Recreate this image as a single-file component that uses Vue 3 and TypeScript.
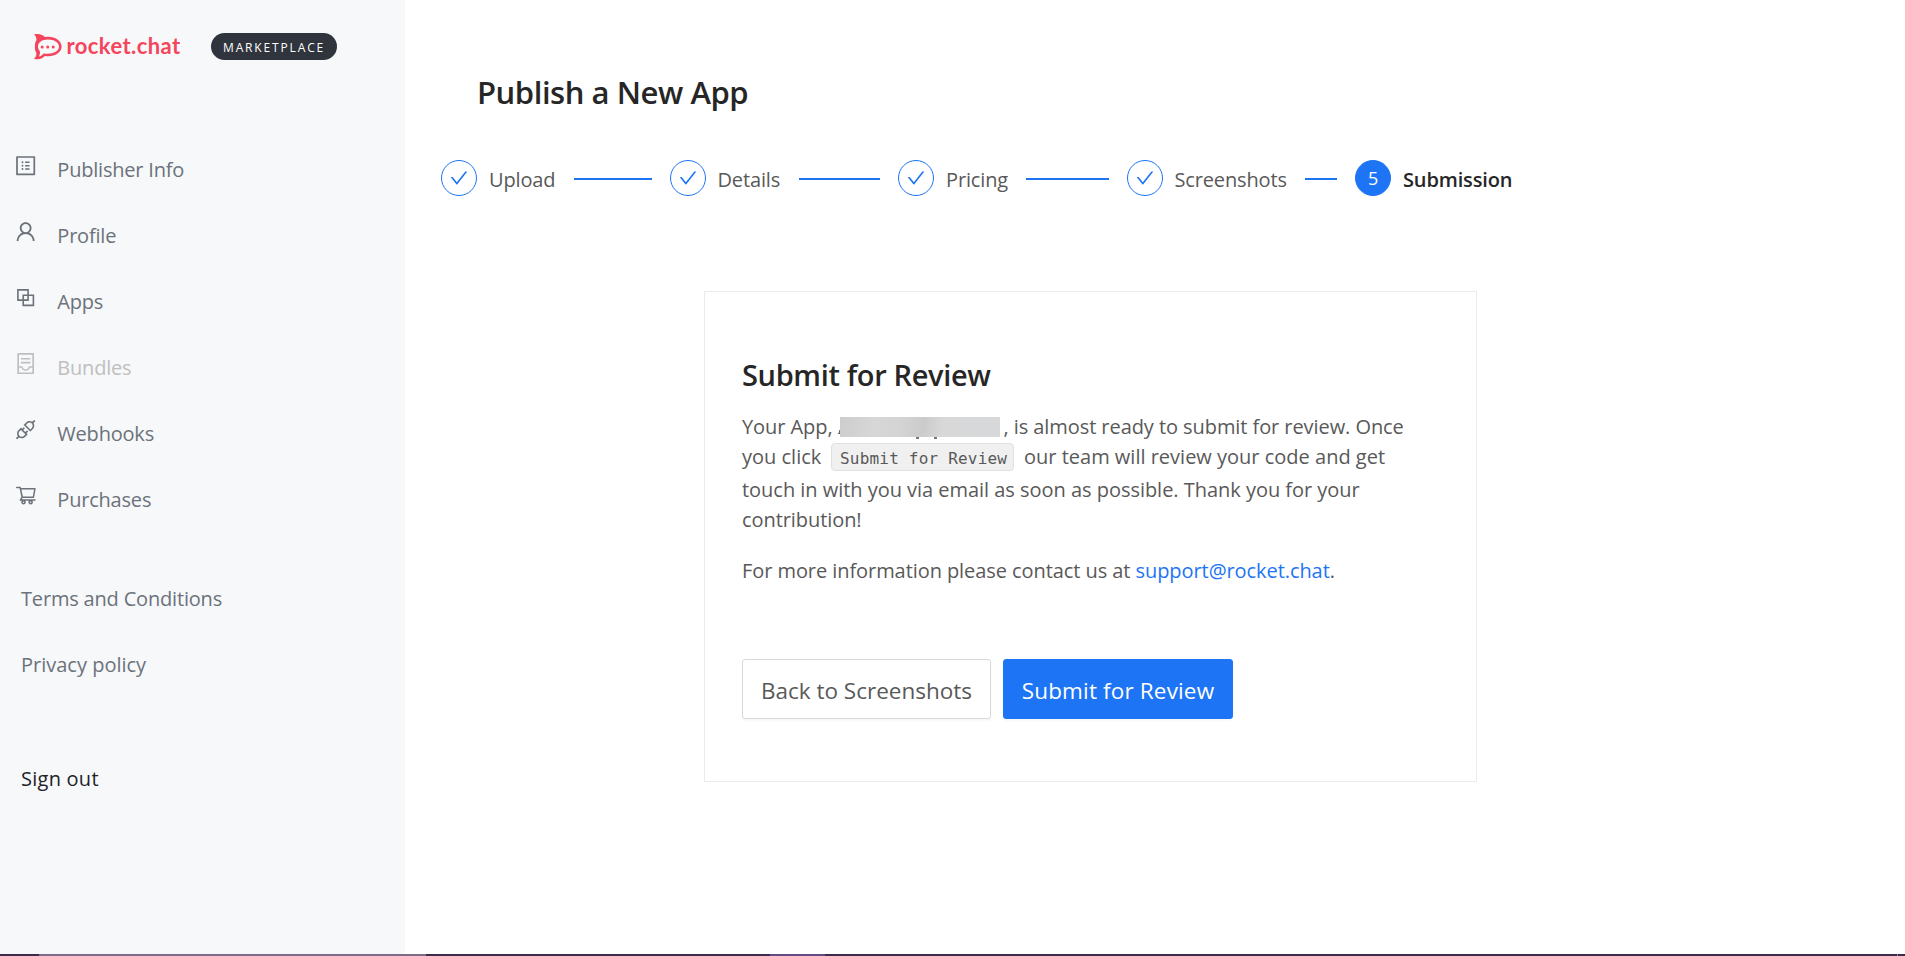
<script setup lang="ts">
interface NavItem {
  label: string
  icon: string
  box?: string
  disabled?: boolean
}

interface Step {
  title: string
  current?: boolean
}

const icons: Record<string, string> = {
  profile:
    'M880 112H144c-17.700 0-32 14.300-32 32v736c0 17.700 14.300 32 32 32h736c17.700 0 32-14.300 32-32V144c0-17.700-14.300-32-32-32zm-40 728H184V184h656v656zM492 400h184v-64H492zM492 544h184v-64H492zM492 688h184v-64H492zM340 368a40 40 0 1 0 80 0 40 40 0 1 0-80 0zM340 512a40 40 0 1 0 80 0 40 40 0 1 0-80 0zM340 656a40 40 0 1 0 80 0 40 40 0 1 0-80 0z',
  user: 'M858.5 763.6a374 374 0 0 0-80.6-119.5 375.63 375.63 0 0 0-119.5-80.6c-.4-.2-.8-.3-1.2-.5C719.5 518 760 444.7 760 362c0-137-111-248-248-248S264 225 264 362c0 82.7 40.5 156 102.8 201.1-.4.2-.8.3-1.2.5-44.8 18.9-85 46-119.5 80.6a375.63 375.63 0 0 0-80.6 119.5A371.7 371.7 0 0 0 136 901.8a8 8 0 0 0 8 8.2h60c4.400 0 7.900-3.500 8-7.800 2-77.200 33-149.500 87.800-204.300 56.700-56.700 132-87.900 212.200-87.900s155.500 31.200 212.200 87.900C779 752.7 810 825 812 902.200c.1 4.400 3.600 7.800 8 7.800h60a8 8 0 0 0 8-8.200c-1-47.800-10.900-94.300-29.500-138.400zM512 534c-45.900 0-89.100-17.900-121.600-50.400S340 407.900 340 362c0-45.900 17.900-89.100 50.400-121.600S466.100 190 512 190s89.100 17.900 121.600 50.400S684 316.100 684 362c0 45.900-17.900 89.100-50.400 121.600S557.900 534 512 534z',
  block:
    'M856 376H648V168c0-8.800-7.200-16-16-16H168c-8.800 0-16 7.200-16 16v464c0 8.800 7.200 16 16 16h208v208c0 8.800 7.200 16 16 16h464c8.800 0 16-7.200 16-16V392c0-8.800-7.200-16-16-16zm-480 16v188H220V220h360v156H392c-8.800 0-16 7.200-16 16zm204 52v136H444V444h136zm224 360H444V648h188c8.800 0 16-7.200 16-16V444h156v360z',
  container:
    'M832 64H192c-17.700 0-32 14.300-32 32v832c0 17.700 14.300 32 32 32h640c17.700 0 32-14.300 32-32V96c0-17.700-14.300-32-32-32zm-40 824H232V687h97.900c11.600 32.800 32 62.300 59.100 84.700 34.500 28.500 78.200 44.300 123 44.300s88.500-15.700 123-44.300c27.100-22.400 47.500-51.900 59.100-84.700H792v201zm0-264H643.600l-5.200 24.700C626.400 708.500 573.200 752 512 752s-114.400-43.500-126.500-103.300l-5.200-24.700H232V136h560v488zM320 341h384c4.400 0 8-3.600 8-8v-48c0-4.400-3.600-8-8-8H320c-4.400 0-8 3.600-8 8v48c0 4.400 3.600 8 8 8zm0 160h384c4.400 0 8-3.600 8-8v-48c0-4.400-3.600-8-8-8H320c-4.400 0-8 3.600-8 8v48c0 4.400 3.600 8 8 8z',
  api: 'M917.7 148.8l-42.4-42.4c-1.6-1.6-3.6-2.3-5.7-2.3s-4.1.8-5.7 2.3l-76.1 76.1a199.27 199.27 0 0 0-112.1-34.3c-51.2 0-102.4 19.5-141.5 58.6L432.3 308.7a8.03 8.03 0 0 0 0 11.3L704 591.7c1.6 1.6 3.6 2.3 5.7 2.3 2 0 4.1-.8 5.7-2.3l101.9-101.9c68.9-69 77-175.7 24.3-253.5l76.1-76.1c3.1-3.2 3.1-8.3 0-11.4zM769.1 441.7l-59.4 59.4-186.8-186.8 59.4-59.4c24.900-24.900 58.100-38.700 93.400-38.700 35.300 0 68.400 13.700 93.400 38.700 24.900 24.900 38.700 58.100 38.700 93.400 0 35.300-13.800 68.400-38.700 93.400zM578.9 546.7a8.03 8.03 0 0 0-11.3 0L501 613.3 410.7 523l66.7-66.700c3.100-3.100 3.100-8.200 0-11.300L441 408.600a8.030 8.030 0 0 0-11.300 0L363 475.300l-43-43a7.850 7.850 0 0 0-5.700-2.300c-2 0-4.100.8-5.700 2.300L206.800 534.200c-68.900 69-77 175.700-24.300 253.500l-76.100 76.100a8.030 8.030 0 0 0 0 11.300l42.400 42.400c1.600 1.600 3.600 2.300 5.700 2.300s4.100-.8 5.700-2.300l76.100-76.100c33.700 22.900 72.900 34.300 112.100 34.300 51.200 0 102.400-19.500 141.500-58.600l101.900-101.900c3.100-3.100 3.100-8.200 0-11.300l-43-43 66.700-66.700c3.100-3.100 3.100-8.200 0-11.300l-36.600-36.200zM441.700 769.100a131.320 131.320 0 0 1-93.400 38.700c-35.300 0-68.400-13.700-93.400-38.700a131.320 131.320 0 0 1-38.700-93.400c0-35.300 13.700-68.400 38.700-93.400l59.400-59.400 186.800 186.800-59.400 59.400z',
  cart: 'M922.9 701.9H327.4l29.9-60.9 496.8-.9c16.8 0 31.2-12 34.2-28.6l68.8-385.1c1.8-10.1-.9-20.5-7.5-28.4a34.99 34.99 0 0 0-26.6-12.5l-632-2.1-5.4-25.4c-3.4-16.2-18-28-34.6-28H96.5a35.3 35.3 0 1 0 0 70.6h125.900L246 312.800l58.100 281.300-74.800 122.100a34.960 34.960 0 0 0-3 36.800c6 11.900 18.100 19.400 31.500 19.400h62.800a102.430 102.430 0 0 0-20.600 61.700c0 56.600 46 102.600 102.600 102.600s102.600-46 102.600-102.600c0-22.300-7.400-44-20.600-61.700h161.100a102.430 102.430 0 0 0-20.600 61.700c0 56.600 46 102.600 102.600 102.600s102.600-46 102.600-102.600c0-22.300-7.400-44-20.600-61.700H923c19.400 0 35.300-15.800 35.300-35.300a35.420 35.420 0 0 0-35.400-35.200zM305.700 253l575.800 1.900-56.400 315.800-452.300.8L305.700 253zm96.900 612.700c-17.400 0-31.600-14.200-31.600-31.600 0-17.400 14.200-31.600 31.600-31.600s31.600 14.200 31.600 31.600a31.600 31.600 0 0 1-31.600 31.600zm325.100 0c-17.400 0-31.600-14.200-31.600-31.600 0-17.400 14.200-31.600 31.600-31.600s31.600 14.200 31.600 31.600a31.600 31.600 0 0 1-31.600 31.600z',
  check:
    'M912 190h-69.900c-9.800 0-19.100 4.500-25.100 12.200L404.700 724.500 207 474a32 32 0 0 0-25.100-12.200H112c-6.700 0-10.400 7.700-6.300 12.900l273.900 347c12.800 16.200 37.400 16.200 50.300 0l488.400-618.900c4.100-5.100.4-12.800-6.300-12.800z',
}

const nav: NavItem[] = [
  { label: 'Publisher Info', icon: 'profile' },
  { label: 'Profile', icon: 'user' },
  { label: 'Apps', icon: 'block' },
  { label: 'Bundles', icon: 'container', disabled: true },
  { label: 'Webhooks', icon: 'api' },
  { label: 'Purchases', icon: 'cart', box: '15 50 970 970' },
]

const steps: Step[] = [
  { title: 'Upload' },
  { title: 'Details' },
  { title: 'Pricing' },
  { title: 'Screenshots' },
  { title: 'Submission', current: true },
]
</script>

<template>
  <div class="page">
    <aside class="sidebar">
      <header class="brand">
        <svg class="brand-mark" viewBox="0 0 28 26" aria-hidden="true">
          <path
            fill-rule="evenodd"
            d="M0 .5C4-.7 8.400 .3 11 3.100C19.200 1.600 27.600 6 27.600 12.600C27.600 19.200 19.200 23.600 10.800 22C8 24.900 4 26 0 24.700C1.900 23 2.700 20.900 2.300 19C.4 16.500 .4 9 2.300 6.600C2.700 4.500 2 2.200 0 .5ZM14 5.600C8 5.600 4 8.400 4 12.600C4 14.600 4.700 16 5.900 17.300C6.100 19.200 5.800 21.100 4.900 22.500C6.800 22.100 8.400 21 9.600 19.400C17.500 20.900 25 18 25 12.600C25 8.400 20 5.600 14 5.600Z"
          />
          <circle cx="8.200" cy="13" r="1.500" />
          <circle cx="13.700" cy="13" r="1.500" />
          <circle cx="19.200" cy="13" r="1.500" />
        </svg>
        <span class="brand-name">rocket.chat</span>
        <span class="badge">MARKETPLACE</span>
      </header>

      <nav class="menu">
        <a v-for="item in nav" :key="item.label" class="menu-item" :class="{ disabled: item.disabled }">
          <svg class="menu-icon" :viewBox="item.box ?? '64 64 896 896'" aria-hidden="true">
            <path fill-rule="evenodd" :d="icons[item.icon]" />
          </svg>
          <span class="menu-label">{{ item.label }}</span>
        </a>
      </nav>
      <nav class="links">
        <a class="link">Terms and Conditions</a>
        <a class="link privacy">Privacy policy</a>
      </nav>
      <a class="link sign-out">Sign out</a>
    </aside>

    <main class="content">
      <h1 class="title">Publish a New App</h1>

      <div class="steps">
        <div v-for="(step, i) in steps" :key="step.title" class="step" :class="{ current: step.current }">
          <span class="step-dot">
            <template v-if="step.current">{{ i + 1 }}</template>
            <svg v-else class="check" viewBox="64 64 896 896" aria-hidden="true"><path :d="icons.check" /></svg>
          </span>
          <span class="step-title">{{ step.title }}</span>
          <span v-if="i < steps.length - 1" class="step-line"></span>
        </div>
      </div>

      <section class="card">
        <h2 class="card-title">Submit for Review</h2>
        <p class="para">
          <span class="line l1">
            <span class="lead">Your App,</span>
            <span class="redacted"></span>
            <span class="rest1">, is almost ready to submit for review. Once</span>
          </span>
          <span class="line l2">
            <span class="lead2">you click</span>
            <code class="code">Submit for Review</code>
            <span>our team will review your code and get</span>
          </span>
          <span class="line l3">touch in with you via email as soon as possible. Thank you for your</span>
          <span class="line l4">contribution!</span>
        </p>
        <p class="para contact">For more information please contact us at <a class="mail">support@rocket.chat</a>.</p>
        <div class="actions">
          <button class="btn back">Back to Screenshots</button>
          <button class="btn primary">Submit for Review</button>
        </div>
      </section>
    </main>

    <footer class="taskbar">
      <span class="seg s1"></span><span class="seg s2"></span><span class="seg s3"></span
      ><span class="seg s4"></span><span class="seg s5"></span><span class="seg s6"></span>
    </footer>
  </div>
</template>

<style>
body {
  margin: 0;
  background: #fff;
}
</style>

<style scoped>
.page {
  display: grid;
  grid-template: 954px 2px / 405px 1fr;
  height: 956px;
  overflow: hidden;
  font: 400 20px/30px 'Open Sans', 'Noto Sans', sans-serif;
  letter-spacing: -0.07px;
  color: #595959;
}
.sidebar {
  display: flex;
  flex-direction: column;
  background: #f7f8fa;
  color: #6c727a;
}
.brand {
  display: flex;
  align-items: center;
  box-sizing: border-box;
  height: 136px;
  padding: 0 0 43px 33.500px;
}
.brand-mark {
  width: 28px;
  height: 26px;
  margin-top: 1px;
  fill: #f5455c;
}
.brand-name {
  width: 144.500px;
  margin-left: 5px;
  padding-bottom: 2px;
  font: 700 22px/26px Lato, sans-serif;
  letter-spacing: 0.4px;
  color: #f5455c;
}
.badge {
  box-sizing: border-box;
  width: 126px;
  height: 27px;
  padding: 2px 0 0 12px;
  border-radius: 14px;
  background: #2f343d;
  color: #fff;
  font-size: 12px;
  line-height: 26px;
  letter-spacing: 1.850px;
}
.menu-item {
  display: flex;
  align-items: center;
  height: 66px;
}
.menu-item.disabled {
  color: #bfbfbf;
}
.menu-icon {
  width: 21.3px;
  height: 21.3px;
  margin: 0 21px 7px 15px;
  fill: currentColor;
}
.menu-label {
  padding-top: 2px;
  letter-spacing: -0.2px;
}
.links {
  margin-top: 34px;
}
.link {
  display: block;
  padding-left: 21px;
  line-height: 66px;
  letter-spacing: -0.18px;
}
.privacy {
  letter-spacing: 0;
}
.sign-out {
  margin-top: 48px;
  letter-spacing: 0.25px;
  color: #1f2329;
}
.content {
  padding: 72px 0 0 36px;
}
.title {
  margin: 0 0 48px 36px;
  font-size: 31px;
  font-weight: 600;
  line-height: 40px;
  letter-spacing: -0.45px;
  color: #262626;
}
.steps {
  display: flex;
}
.step {
  display: flex;
  align-items: center;
  width: 210.500px;
  height: 36px;
  margin-right: 18px;
}
.step-dot {
  display: flex;
  align-items: center;
  justify-content: center;
  box-sizing: border-box;
  flex: none;
  width: 36px;
  height: 36px;
  border: 1px solid #1d74f5;
  border-radius: 50%;
  font-size: 18px;
}
.check {
  width: 18px;
  height: 18px;
  fill: #1d74f5;
}
.step-title {
  margin-left: 12px;
  padding-top: 4px;
  letter-spacing: -0.15px;
}
.step-line {
  flex: 1;
  height: 2px;
  margin: 2px 0 0 18.500px;
  background: #1d74f5;
}
.current .step-dot {
  background: #1d74f5;
  color: #fff;
}
.current .step-title {
  font-weight: 600;
  color: #262626;
}
.card {
  box-sizing: border-box;
  width: 773px;
  height: 491px;
  margin: 95px 0 0 263px;
  padding: 64px 37px 0;
  border: 1px solid #ebebeb;
}
.card-title {
  margin: 0 0 18px;
  font-size: 29px;
  font-weight: 600;
  line-height: 38px;
  letter-spacing: -0.35px;
  color: #262626;
}
.para {
  margin: 0;
}
.line {
  display: flex;
  height: 30px;
  white-space: nowrap;
}
.lead {
  width: 98px;
}
.redacted {
  position: relative;
  width: 160px;
  height: 20px;
  margin: 5px 3.500px 0 0;
  background: linear-gradient(100deg, #cdcdcd, #d7d7d7 22%, #d4d4d4 38%, #cbcbcb 52%, #d8d8d8 64%, #d6d8da);
}
/* Ends of the letters that stick out from under the blurred name. */
.redacted::before {
  content: '';
  position: absolute;
  left: -2px;
  top: 12px;
  width: 2px;
  height: 5px;
  background: linear-gradient(110deg, transparent 45%, #666 55%);
}
.redacted::after {
  content: '';
  position: absolute;
  left: 76px;
  top: 20px;
  width: 3px;
  height: 2px;
  background: #777;
  box-shadow: 18px 0 #777;
}
.l2 {
  height: 33px;
}
.lead2 {
  width: 89px;
  letter-spacing: 0;
}
.code {
  box-sizing: border-box;
  width: 183px;
  height: 28px;
  margin: 1px 10px 0 0;
  padding-left: 8px;
  border: 1px solid #e0e0e0;
  border-radius: 4px;
  background: #f0f0f0;
  font: 16px/29px 'DejaVu Sans Mono', monospace;
  letter-spacing: 0.2px;
}
.l2 span:last-child {
  letter-spacing: 0;
}
.l3 {
  letter-spacing: -0.03px;
}
.contact {
  margin-top: 21px;
}
.mail {
  color: #1d74f5;
}
.actions {
  display: flex;
  gap: 12px;
  margin-top: 73px;
}
.btn {
  box-sizing: border-box;
  height: 60px;
  padding: 4px 0 0;
  border: 1px solid #d9d9d9;
  border-radius: 3px;
  background: #fff;
  box-shadow: 0 2px 2px rgba(0, 0, 0, 0.03);
  color: #595959;
  font: 400 22.5px/30px 'Open Sans', 'Noto Sans', sans-serif;
}
.back {
  width: 249px;
}
.primary {
  width: 230px;
  border-color: #1d74f5;
  background: #1d74f5;
  color: #fff;
  letter-spacing: 0.15px;
}
.taskbar {
  grid-column: 1 / -1;
  display: flex;
  background: #3b2c4b;
}
.seg {
  height: 2px;
}
.s1 {
  width: 39px;
}
.s2 {
  width: 387px;
  background: #7b6c88;
}
.s3 {
  width: 344px;
}
.s4 {
  width: 55px;
  background: #634a84;
}
.s5 {
  width: 1072px;
}
.s6 {
  width: 1px;
  background: #8d8496;
}
</style>
